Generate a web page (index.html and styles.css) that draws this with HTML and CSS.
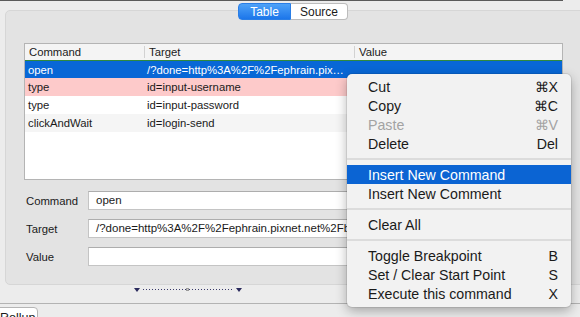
FILE: index.html
```html
<!DOCTYPE html>
<html lang="en">

<head>
    <meta charset="UTF-8">
    <meta name="viewport" content="width=device-width, initial-scale=1.0">
    <title>Selenium IDE</title>
    <link rel="stylesheet" href="styles.css">
</head>

<body>
    <div class="topbar"></div>

    <div class="tabs">
        <span class="tab active">Table</span>
        <span class="tab">Source</span>
    </div>

    <div class="panel">
        <div class="grid">
            <div class="grid-head">
                <span>Command</span>
                <span class="col-sep">Target</span>
                <span class="col-sep">Value</span>
            </div>
            <div class="grid-row selected">
                <span>open</span>
                <span>/?done=http%3A%2F%2Fephrain.pixnet.net%2Fblog%2Fpost</span>
                <span></span>
            </div>
            <div class="grid-row breakpoint">
                <span>type</span>
                <span>id=input-username</span>
                <span></span>
            </div>
            <div class="grid-row">
                <span>type</span>
                <span>id=input-password</span>
                <span></span>
            </div>
            <div class="grid-row alt">
                <span>clickAndWait</span>
                <span>id=login-send</span>
                <span></span>
            </div>
        </div>

        <div class="form">
            <label>Command</label>
            <div class="input">open</div>
            <label>Target</label>
            <div class="input">/?done=http%3A%2F%2Fephrain.pixnet.net%2Fblog%2Fpost</div>
            <label>Value</label>
            <div class="input"></div>
        </div>
    </div>

    <div class="splitter">
        <span class="tri"></span>
        <span class="dots"></span>
        <span class="grip"></span>
        <span class="dots"></span>
        <span class="tri"></span>
    </div>

    <div class="divider"></div>

    <div class="bottom">
        <span class="rollup">Rollup</span>
    </div>

    <!-- context menu over the table -->
    <div class="menu">
        <div class="item"><span>Cut</span><span>⌘X</span></div>
        <div class="item"><span>Copy</span><span>⌘C</span></div>
        <div class="item disabled"><span>Paste</span><span>⌘V</span></div>
        <div class="item"><span>Delete</span><span>Del</span></div>
        <div class="sep"></div>
        <div class="item hover"><span>Insert New Command</span></div>
        <div class="item"><span>Insert New Comment</span></div>
        <div class="sep"></div>
        <div class="item"><span>Clear All</span></div>
        <div class="sep"></div>
        <div class="item"><span>Toggle Breakpoint</span><span>B</span></div>
        <div class="item"><span>Set / Clear Start Point</span><span>S</span></div>
        <div class="item"><span>Execute this command</span><span>X</span></div>
    </div>
</body>

</html>
```

FILE: styles.css
```css
body {
    margin: 0;
    width: 580px;
    height: 317px;
    overflow: hidden;
    position: relative;
    background-color: #ececec;
    font-family: "Liberation Sans", Arial, sans-serif;
    color: #1a1a1a;
}

.topbar {
    width: 563px;
    height: 1px;
    background-color: #5a5a5a;
}

.tabs {
    display: flex;
    position: relative;
    z-index: 1;
    margin-top: 2px;
    padding-left: 238px;
    height: 17px;
}

.tab {
    display: flex;
    align-items: center;
    justify-content: center;
    width: 57px;
    font-size: 12px;
    background: white;
    border: 1px solid #bcbcbc;
    border-left: none;
    border-radius: 0 4px 4px 0;
    box-sizing: border-box;
}

.tab.active {
    width: 53px;
    color: white;
    background: linear-gradient(#4ea2f8, #1c76ea);
    border: 1px solid #2a7ee6;
    border-radius: 4px 0 0 4px;
}

.panel {
    margin-top: -10px;
    margin-left: 5px;
    width: 600px;
    height: 275px;
    box-sizing: border-box;
    padding: 32px 0 0 18px;
    background-color: #e3e3e3;
    border: 1px solid #d6d6d6;
    border-radius: 5px;
}

.grid {
    width: 539px;
    height: 137px;
    box-sizing: border-box;
    background: white;
    border: 1px solid #b4b4b4;
    font-size: 11.3px;
}

.grid-head,
.grid-row {
    display: grid;
    grid-template-columns: 119px 210px 1fr;
    height: 18px;
    align-items: center;
}

.grid-head {
    height: 16px;
    background-color: #f4f4f4;
}

.grid-head span {
    padding-left: 4px;
}

.grid-head .col-sep {
    border-left: 1px solid #d2d2d2;
    line-height: 12px;
}

.grid-row span {
    padding: 0 8px 0 3px;
    white-space: nowrap;
    overflow: hidden;
    text-overflow: ellipsis;
}

.grid-row.selected {
    color: white;
    background-color: #0867d6;
    border-top: 1px solid #2f8a3e;
    height: 17px;
}

.grid-row.breakpoint {
    background-color: #fdcaca;
}

.grid-row.alt {
    background-color: #f5f5f5;
}

.form {
    display: grid;
    grid-template-columns: 64px 475px;
    grid-auto-rows: 19px;
    row-gap: 9px;
    margin-top: 11px;
    font-size: 11.3px;
    align-items: center;
}

.form label {
    padding-left: 2px;
}

.input {
    height: 19px;
    box-sizing: border-box;
    padding-left: 7px;
    line-height: 17px;
    font-size: 11.5px;
    background: white;
    border: 1px solid #c4c4c4;
    border-top-color: #adadad;
    white-space: nowrap;
    overflow: hidden;
}

.splitter {
    display: flex;
    align-items: flex-start;
    height: 18px;
    padding-left: 134px;
    box-sizing: border-box;
}

.tri {
    margin-top: 3px;
    width: 0;
    height: 0;
    border-left: 3px solid transparent;
    border-right: 3px solid transparent;
    border-top: 4px solid #2a2a5c;
}

.dots {
    margin-top: 4px;
    width: 43px;
    height: 1px;
    background-image: repeating-linear-gradient(to right, #3a3a6a 0 1px, transparent 1px 3px);
}

.tri + .dots {
    margin-left: 3px;
}

.dots + .tri {
    margin-left: 4px;
}

.grip {
    margin-top: 3px;
    width: 3px;
    height: 3px;
    border: 1px solid #9a9a9a;
    background: #d6d6d6;
    box-sizing: border-box;
}

.divider {
    height: 1px;
    background-color: #b3b3b3;
}

.bottom {
    padding-top: 3px;
}

.rollup {
    display: inline-block;
    margin-left: -9px;
    padding: 2px 2px 0 8px;
    height: 14px;
    font-size: 12.5px;
    line-height: 16px;
    background: white;
    border: 1px solid #b5b5b5;
    border-radius: 4px 4px 0 0;
}

.menu {
    position: absolute;
    left: 347px;
    top: 74px;
    width: 224px;
    padding: 3px 0 4px;
    box-sizing: border-box;
    background-color: #f2f2f2;
    border-radius: 5px;
    box-shadow: 0 0 0 1px rgba(0, 0, 0, 0.08), 0 4px 12px rgba(0, 0, 0, 0.3);
    font-size: 14.2px;
}

.item {
    display: flex;
    justify-content: space-between;
    align-items: center;
    height: 19px;
    padding: 0 13px 0 21px;
    color: #1a1a1a;
}

.item.disabled {
    color: #a3a3a3;
}

.item.hover {
    color: white;
    background-color: #0b64d3;
}

.sep {
    height: 2px;
    margin: 5px 0;
    background-color: #dcdcdc;
}
```
